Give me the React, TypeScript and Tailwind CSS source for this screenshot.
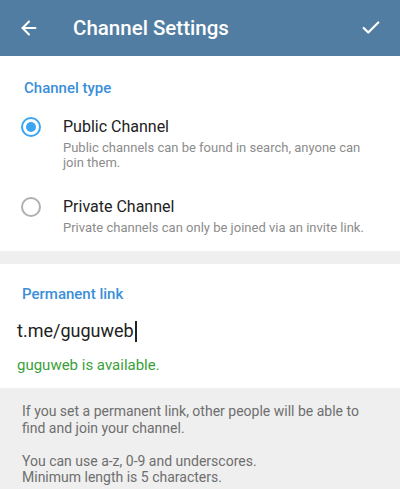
import { ArrowLeft, Check } from "lucide-react"

function Radio({ checked }: { checked?: boolean }) {
  return (
    <div
      className={`flex h-[20px] w-[20px] shrink-0 items-center justify-center rounded-full border-2 ${
        checked ? "border-[#3da5ef]" : "border-[#b0b0b0]"
      }`}
    >
      {checked && <div className="h-[10px] w-[10px] rounded-full bg-[#3da5ef]" />}
    </div>
  )
}

function Option({ title, desc, checked }: { title: string; desc: string; checked?: boolean }) {
  return (
    <div className="flex items-start pl-[21px] pr-4">
      <Radio checked={checked} />
      <div className="ml-[22px] flex flex-col">
        <div className="text-[16px] leading-[20px] text-[#222]">{title}</div>
        <div className="mt-[3px] text-[13px] leading-[15px] text-[#8c8c8c]">{desc}</div>
      </div>
    </div>
  )
}

export default function App() {
  return (
    <div className="flex h-[489px] w-[400px] flex-col overflow-hidden bg-[#efefef] font-['Roboto',sans-serif]">
      <header className="flex h-[56px] shrink-0 items-center bg-[#517da2] text-white shadow-[0_1px_2px_rgba(0,0,0,0.15)]">
        <div className="flex w-[56px] justify-center pl-[1px]">
          <ArrowLeft size={22} strokeWidth={2.2} />
        </div>
        <div className="ml-[17px] flex-1 text-[20.5px] font-medium leading-none">Channel Settings</div>
        <div className="flex w-[56px] justify-center pr-[2px]">
          <Check size={22} strokeWidth={2.4} />
        </div>
      </header>

      <section className="bg-white pb-[16px] pt-[23px]">
        <div className="pl-[24px] text-[15px] font-medium leading-[18px] text-[#3a8fd8]">Channel type</div>
        <div className="mt-[20px] flex flex-col gap-[27px]">
          <Option
            checked
            title="Public Channel"
            desc="Public channels can be found in search, anyone can join them."
          />
          <Option title="Private Channel" desc="Private channels can only be joined via an invite link." />
        </div>
      </section>

      <div className="h-[13px] shrink-0" />

      <section className="bg-white pb-[14px] pt-[21px]">
        <div className="pl-[22px] text-[15px] font-medium leading-[18px] text-[#3a8fd8]">Permanent link</div>
        <div className="mt-[17px] flex items-center pl-[17px] text-[18px] leading-[22px] text-[#222]">
          <span>t.me/guguweb</span>
          <span className="ml-[1px] h-[21px] w-[2px] bg-[#222]" />
        </div>
        <div className="mt-[14px] pl-[17px] text-[15px] leading-[18px] text-[#3aa13a]">guguweb is available.</div>
      </section>

      <div className="px-[22px] pt-[15px] text-[14px] leading-[16.5px] text-[#6e6e6e]">
        <p>If you set a permanent link, other people will be able to find and join your channel.</p>
        <p className="mt-[16.5px]">
          You can use a-z, 0-9 and underscores.
          <br />
          Minimum length is 5 characters.
        </p>
      </div>
    </div>
  )
}
